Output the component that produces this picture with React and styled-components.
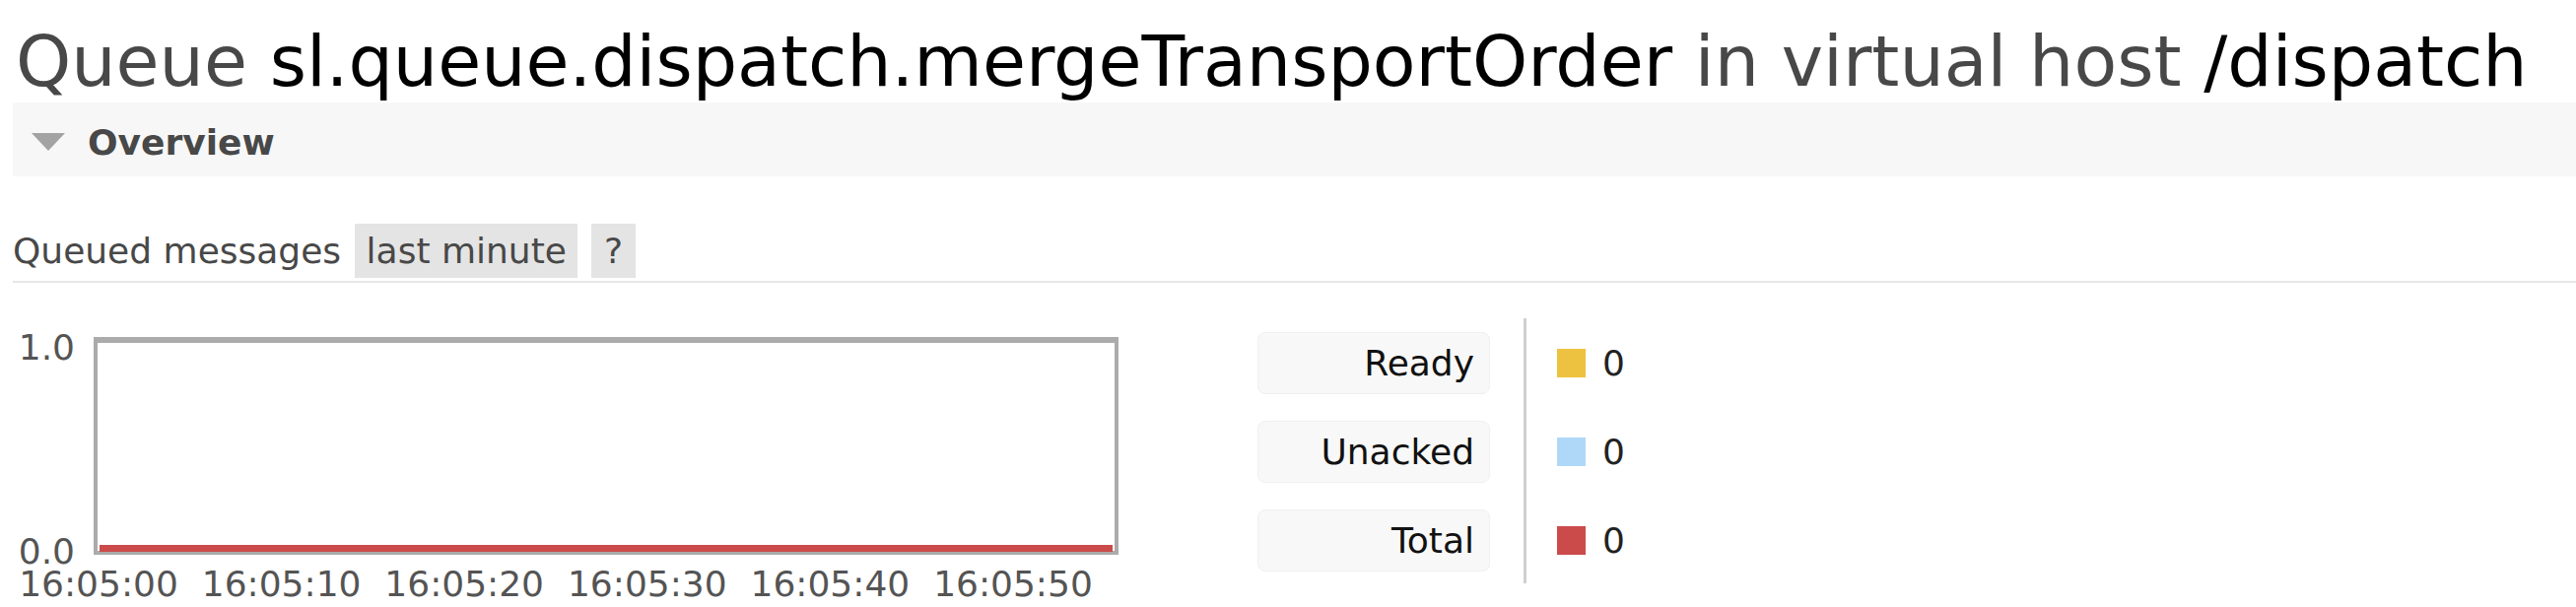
import React from 'react';
import styled, { createGlobalStyle } from 'styled-components';

const GlobalStyle = createGlobalStyle`
  body {
    margin: 0;
    background: #fff;
    font-family: "DejaVu Sans", Verdana, sans-serif;
    color: #484848;
  }
`;

const Page = styled.div`
  padding-left: 13px;
  font-size: 36px;
`;

const Title = styled.h1`
  margin: 21px 0 0 3px;
  font-size: 71.5px;
  font-weight: normal;
  line-height: 83px;
  white-space: nowrap;
  color: #484848;
`;

const Strong = styled.span`
  color: #000;
`;

const SectionBar = styled.div`
  display: flex;
  align-items: center;
  height: 75px;
  padding: 5px 0 0 19px;
  box-sizing: border-box;
  background: #f7f7f7;
  gap: 23px;
`;

const Arrow = styled.span`
  width: 0;
  height: 0;
  border-left: 17px solid transparent;
  border-right: 17px solid transparent;
  border-top: 18px solid #a3a3a3;
`;

const SectionTitle = styled.h2`
  margin: 0;
  font-size: 36px;
  font-weight: bold;
  color: #484848;
`;

const Toolbar = styled.div`
  display: flex;
  align-items: center;
  gap: 14px;
  margin-top: 48px;
  padding: 0 0 3px 0;
  border-bottom: 2px solid #e6e6e6;
`;

const Pill = styled.span`
  display: inline-block;
  height: 55px;
  line-height: 55px;
  padding: 0 ${(p) => (p.$narrow ? '12.5px' : '11.5px')};
  background: #e4e4e4;
  color: #484848;
`;

const ChartSection = styled.div`
  display: flex;
  align-items: flex-start;
  margin-top: 36px;
  gap: 141px;
`;

const ChartBlock = styled.div`
  margin-top: 7px;
`;

const PlotRow = styled.div`
  display: grid;
  grid-template-columns: 82px 1040px;
  align-items: center;
`;

const YAxis = styled.div`
  display: flex;
  flex-direction: column;
  justify-content: space-between;
  box-sizing: border-box;
  height: 245px;
  padding: 8px 19px 0 0;
  text-align: right;
  line-height: 30px;
  color: #545454;
`;

const XAxis = styled.div`
  display: flex;
  gap: 13.6px;
  margin-left: 1px;
  line-height: 35px;
  color: #545454;
`;

const Tick = styled.span`
  width: 172px;
  text-align: center;
  white-space: nowrap;
`;

const Legend = styled.div`
  display: flex;
  align-items: stretch;
`;

const LegendCol = styled.div`
  display: flex;
  flex-direction: column;
  gap: 27px;
  padding: 14px 0 12px;
`;

const LegendLabel = styled.div`
  width: 236px;
  height: 63px;
  box-sizing: border-box;
  padding-right: 15px;
  line-height: 61px;
  text-align: right;
  background: #f8f8f8;
  border: 1px solid #f0f0f0;
  border-radius: 8px;
  color: #111;
`;

const Divider = styled.div`
  width: 3px;
  margin: 0 31px 0 34px;
  background: #cfcfcf;
`;

const LegendValue = styled.div`
  display: flex;
  align-items: center;
  height: 63px;
  gap: 17px;
  color: #222;
`;

const Swatch = styled.span`
  width: 29px;
  height: 29px;
  background: ${(p) => p.$color};
`;

const series = [
  { label: 'Ready', color: '#edc240', value: 0 },
  { label: 'Unacked', color: '#afd8f8', value: 0 },
  { label: 'Total', color: '#cb4b4b', value: 0 },
];

const ticks = ['16:05:00', '16:05:10', '16:05:20', '16:05:30', '16:05:40', '16:05:50'];

const Plot = () => (
  <svg width="1040" height="221" viewBox="0 0 1040 221">
    <rect x="2" y="2" width="1036" height="217" fill="#fff" stroke="#ababab" strokeWidth="4" />
    <rect x="0" y="0" width="1040" height="6" fill="#ababab" />
    <rect x="6" y="211" width="1028" height="7" fill="#cb4b4b" />
  </svg>
);

export default function App() {
  return (
    <>
      <GlobalStyle />
      <Page>
        <Title>
          Queue <Strong>sl.queue.dispatch.mergeTransportOrder</Strong> in virtual host{' '}
          <Strong>/dispatch</Strong>
        </Title>
        <SectionBar>
          <Arrow />
          <SectionTitle>Overview</SectionTitle>
        </SectionBar>
        <Toolbar>
          <span>Queued messages</span>
          <Pill>last minute</Pill>
          <Pill $narrow>?</Pill>
        </Toolbar>
        <ChartSection>
          <ChartBlock>
            <PlotRow>
              <YAxis>
                <span>1.0</span>
                <span>0.0</span>
              </YAxis>
              <Plot />
            </PlotRow>
            <XAxis>
              {ticks.map((t) => (
                <Tick key={t}>{t}</Tick>
              ))}
            </XAxis>
          </ChartBlock>
          <Legend>
            <LegendCol>
              {series.map((s) => (
                <LegendLabel key={s.label}>{s.label}</LegendLabel>
              ))}
            </LegendCol>
            <Divider />
            <LegendCol>
              {series.map((s) => (
                <LegendValue key={s.label}>
                  <Swatch $color={s.color} />
                  {s.value}
                </LegendValue>
              ))}
            </LegendCol>
          </Legend>
        </ChartSection>
      </Page>
    </>
  );
}
